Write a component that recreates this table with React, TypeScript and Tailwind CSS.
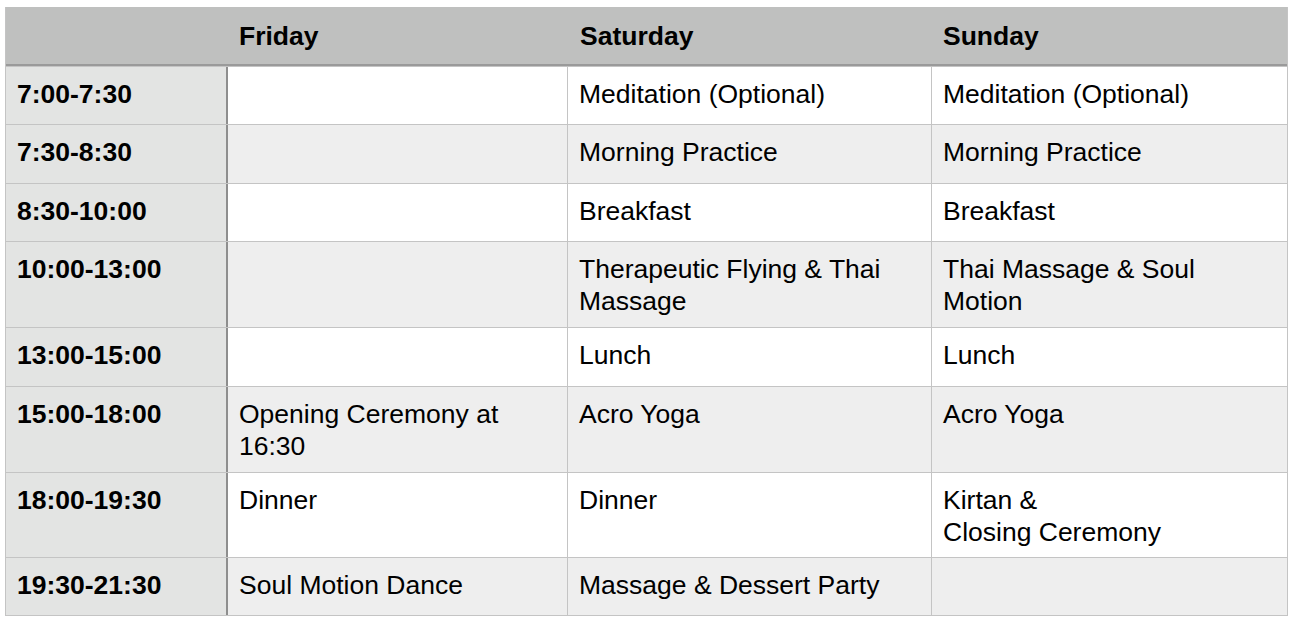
const rows: { time: string; fri: string[]; sat: string[]; sun: string[]; h: string }[] = [
  { time: "7:00-7:30", fri: [], sat: ["Meditation (Optional)"], sun: ["Meditation (Optional)"], h: "h-[58px]" },
  { time: "7:30-8:30", fri: [], sat: ["Morning Practice"], sun: ["Morning Practice"], h: "h-[59px]" },
  { time: "8:30-10:00", fri: [], sat: ["Breakfast"], sun: ["Breakfast"], h: "h-[58px]" },
  { time: "10:00-13:00", fri: [], sat: ["Therapeutic Flying & Thai", "Massage"], sun: ["Thai Massage & Soul", "Motion"], h: "h-[86px]" },
  { time: "13:00-15:00", fri: [], sat: ["Lunch"], sun: ["Lunch"], h: "h-[59px]" },
  { time: "15:00-18:00", fri: ["Opening Ceremony at", "16:30"], sat: ["Acro Yoga"], sun: ["Acro Yoga"], h: "h-[86px]" },
  { time: "18:00-19:30", fri: ["Dinner"], sat: ["Dinner"], sun: ["Kirtan &", "Closing Ceremony"], h: "h-[85px]" },
  { time: "19:30-21:30", fri: ["Soul Motion Dance"], sat: ["Massage & Dessert Party"], sun: [], h: "h-[58px]" },
];

function Cell({ lines, className }: { lines: string[]; className: string }) {
  return (
    <div className={`pl-[11px] pt-[11px] ${className}`}>
      {lines.map((l) => (
        <div key={l} className="whitespace-nowrap">{l}</div>
      ))}
    </div>
  );
}

export default function App() {
  return (
    <div className="w-[1296px] h-[624px] bg-white pt-[7px] pl-[5px] text-[26.5px] leading-[32px] text-black font-['Liberation_Sans',Arial,sans-serif]">
      <div className="w-[1283px] border-l border-r border-b border-[#c4c4c4]">
        {/* header */}
        <div className="flex h-[59px] bg-[#bfc0bf] border-b-2 border-[#9a9a9a] font-bold">
          <div className="w-[222px]" />
          <div className="w-[340px] pl-[11px] pt-[13px]">Friday</div>
          <div className="w-[364px] pl-[12px] pt-[13px]">Saturday</div>
          <div className="flex-1 pl-[11px] pt-[13px]">Sunday</div>
        </div>

        {rows.map((r, i) => {
          const bg = i % 2 === 0 ? "bg-white" : "bg-[#eeeeee]";
          return (
            <div key={r.time} className={`flex border-t border-[#c4c4c4] ${r.h} ${bg}`}>
              <Cell lines={[r.time]} className="w-[222px] bg-[#e3e4e3] border-r-2 border-[#8e8e8e] font-bold" />
              <Cell lines={r.fri} className="w-[340px] border-r border-[#c4c4c4]" />
              <Cell lines={r.sat} className="w-[364px] border-r border-[#c4c4c4]" />
              <Cell lines={r.sun} className="flex-1" />
            </div>
          );
        })}
      </div>
    </div>
  );
}
